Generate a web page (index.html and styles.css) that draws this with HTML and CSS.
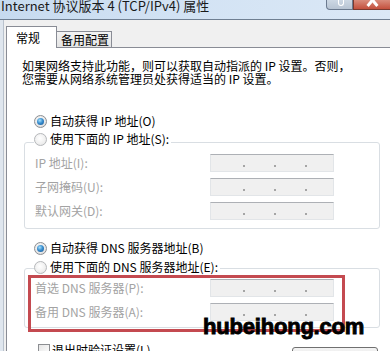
FILE: index.html
```html
<!DOCTYPE html>
<html lang="zh-CN">
<head>
<meta charset="utf-8">
<title>Internet 协议版本 4 (TCP/IPv4) 属性</title>
<link rel="stylesheet" href="styles.css">
</head>
<body>
<div class="window">
  <div class="titlebar">
    <span class="title">Internet 协议版本 4 (TCP/IPv4) 属性</span>
    <div class="caption-btns">
      <span class="cap-help"></span>
      <span class="cap-close"></span>
    </div>
  </div>
  <div class="frame">
    <div class="tabs">
      <div class="tab active">常规</div>
      <div class="tab">备用配置</div>
    </div>
    <div class="panel">
      <p class="intro">如果网络支持此功能，则可以获取自动指派的 IP 设置。否则，<br>您需要从网络系统管理员处获得适当的 IP 设置。</p>

      <div class="opt"><span class="radio on"></span><span>自动获得 IP 地址(O)</span></div>
      <fieldset class="group g-ip">
        <legend class="opt legend-ip"><span class="radio"></span><span>使用下面的 IP 地址(S):</span></legend>
        <div class="field"><span class="lbl">IP 地址(I):</span><span class="ipbox"><i></i><i></i><i></i></span></div>
        <div class="field"><span class="lbl">子网掩码(U):</span><span class="ipbox"><i></i><i></i><i></i></span></div>
        <div class="field"><span class="lbl">默认网关(D):</span><span class="ipbox"><i></i><i></i><i></i></span></div>
      </fieldset>

      <div class="opt opt-dns"><span class="radio on"></span><span>自动获得 DNS 服务器地址(B)</span></div>
      <fieldset class="group g-dns">
        <legend class="opt legend-dns"><span class="radio"></span><span>使用下面的 DNS 服务器地址(E):</span></legend>
        <div class="field"><span class="lbl">首选 DNS 服务器(P):</span><span class="ipbox"><i></i><i></i><i></i></span></div>
        <div class="field"><span class="lbl">备用 DNS 服务器(A):</span><span class="ipbox"><i></i><i></i><i></i></span></div>
      </fieldset>

      <div class="bottom">
        <div class="check-row"><span class="checkbox"></span><span>退出时验证设置(L)</span></div>
        <div class="button">高级(V)...</div>
      </div>

      <div class="annot"></div>
      <div class="wm">hubeihong.com</div>
    </div>
  </div>
</div>
</body>
</html>
```

FILE: styles.css
```css
* { box-sizing: border-box; }
html, body { margin: 0; padding: 0; }
body {
  width: 390px;
  height: 351px;
  overflow: hidden;
  background: #f0f0f0;
  font-family: "Noto Sans CJK SC", "DejaVu Sans", sans-serif;
  font-size: 12px;
  color: #000;
}
.window { width: 390px; height: 351px; overflow: hidden; padding-left: 3px; background: #dfe6ee; }

.titlebar {
  display: flex;
  align-items: flex-start;
  height: 20px;
  margin-left: -3px;
  background: linear-gradient(to right, #c7dbf0 0%, #d3e3f4 50%, #dbe8f6 100%);
  border-bottom: 1px solid #6f7f92;
  overflow: hidden;
}
.title {
  padding-left: 1px;
  font-size: 13px;
  line-height: 12px;
  color: #1a1a1a;
  white-space: nowrap;
}
.caption-btns { display: flex; margin-left: auto; }
.cap-help {
  position: relative;
  width: 27px; height: 10px;
  border: 1px solid #6b7a8f; border-top: none;
  border-radius: 0 0 0 4px;
  background: linear-gradient(#cdd8e4, #b7c4d3);
}
.cap-help::after {
  content: "";
  position: absolute;
  left: 11px; top: 0;
  width: 4px; height: 5px;
  border: 1.5px solid #fff;
  border-top: none;
  border-radius: 0 0 3px 3px;
}
.cap-close {
  position: relative;
  width: 37px; height: 10px;
  border: 1px solid #7a3a30; border-top: none; border-right: none;
  background: linear-gradient(#d98c7c, #c4503d);
}
.cap-close::before, .cap-close::after {
  content: "";
  position: absolute;
  left: 15px; top: -2px;
  width: 3px; height: 9px;
  background: #fff;
  transform: rotate(40deg);
}
.cap-close::after { left: 19px; transform: rotate(-40deg); }

.frame {
  height: 331px;
  background: #f0f0f0;
  border-left: 1px solid #b9c2cd;
  padding-left: 2px;
}
.tabs { display: flex; align-items: flex-end; height: 27px; }
.tab {
  height: 16px;
  border: 1px solid #898c95;
  border-bottom: none;
  background: linear-gradient(#f3f3f3, #e4e4e4);
  line-height: 15px;
  white-space: nowrap;
}
.tab.active {
  width: 51px; height: 22px;
  margin-bottom: -1px;
  padding: 3px 0 0 9px;
  background: #fff;
  position: relative;
  z-index: 1;
}
.tab + .tab { width: 56px; padding-left: 4px; margin-left: -1px; }

.panel {
  position: relative;
  height: 304px;
  background: #fff;
  border-top: 1px solid #898c95;
  border-left: 1px solid #898c95;
  padding: 11px 0 0 15px;
}
.intro { margin: 0; line-height: 13px; white-space: nowrap; }

.opt { display: flex; align-items: center; gap: 3px; height: 18px; line-height: 16px; white-space: nowrap; }
.panel > .opt { margin-top: 27px; padding-left: 12px; }
.panel > .opt.opt-dns { margin-top: 10px; }

.radio {
  position: relative;
  flex: none;
  width: 13px; height: 13px;
  border-radius: 50%;
  border: 1px solid #8c8e92;
  background: radial-gradient(circle at 45% 40%, #ffffff 0%, #e9e9e9 55%, #cfcfcf 100%);
}
.radio.on::after {
  content: "";
  position: absolute;
  left: 2px; top: 2px;
  width: 7px; height: 7px;
  border-radius: 50%;
  background: radial-gradient(circle at 40% 35%, #a8e1fb 0%, #3a8fd0 45%, #12508e 100%);
}
legend .radio { border-color: #b5b7ba; background: radial-gradient(circle at 45% 40%, #ffffff 0%, #efefef 60%, #dddddd 100%); }

.group {
  width: 356px;
  margin: 1px 0 0 2px;
  padding: 1px 0 8px 10px;
  border: 1px solid #d9dee3;
  border-radius: 3px;
  min-inline-size: 0;
}
.group.g-dns { margin-top: 2px; padding: 2px 0 6px 10px; }
.group legend { padding: 0 2px 6px 0; margin-left: -1px; height: auto; }
.group legend.legend-dns { padding-bottom: 2px; }

.field { display: grid; grid-template-columns: 175px 124px; align-items: center; height: 18px; }
.field + .field { margin-top: 6px; }
.lbl { color: #a3a3a3; white-space: nowrap; line-height: 16px; }
.ipbox {
  display: flex;
  align-items: center;
  gap: 29px;
  height: 18px;
  padding-left: 32px;
  background: #f0f0f0;
  border: 1px solid #e2e5e8;
  border-top-color: #adb0b5;
}
.ipbox i { display: block; width: 2px; height: 2px; margin-top: 6px; background: #a5a5a5; }

.bottom { display: grid; grid-template-columns: 270px 86px; margin-top: 15px; }
.check-row { display: flex; align-items: center; gap: 2px; padding-left: 16px; height: 14px; color: #000; white-space: nowrap; line-height: 14px; }
.checkbox { flex: none; width: 12px; height: 12px; border: 1px solid #8c8e92; background: linear-gradient(135deg, #e6e6e6, #ffffff); }
.button {
  margin-top: 4px;
  height: 22px;
  border: 1px solid #707070;
  border-radius: 3px;
  background: linear-gradient(#f3f3f3, #e2e2e2);
  text-align: center;
  line-height: 20px;
  white-space: nowrap;
}

.annot {
  position: absolute;
  left: 21px; top: 227px;
  width: 317px; height: 57px;
  border: 3px solid #c44a50;
}
.wm {
  position: absolute;
  left: 196px; top: 268px;
  font-family: "Liberation Sans", Arial, sans-serif;
  font-weight: bold;
  font-size: 22px;
  line-height: 22px;
  color: #000;
  -webkit-text-stroke: 0.9px #000;
  letter-spacing: -0.2px;
  white-space: nowrap;
}
```
